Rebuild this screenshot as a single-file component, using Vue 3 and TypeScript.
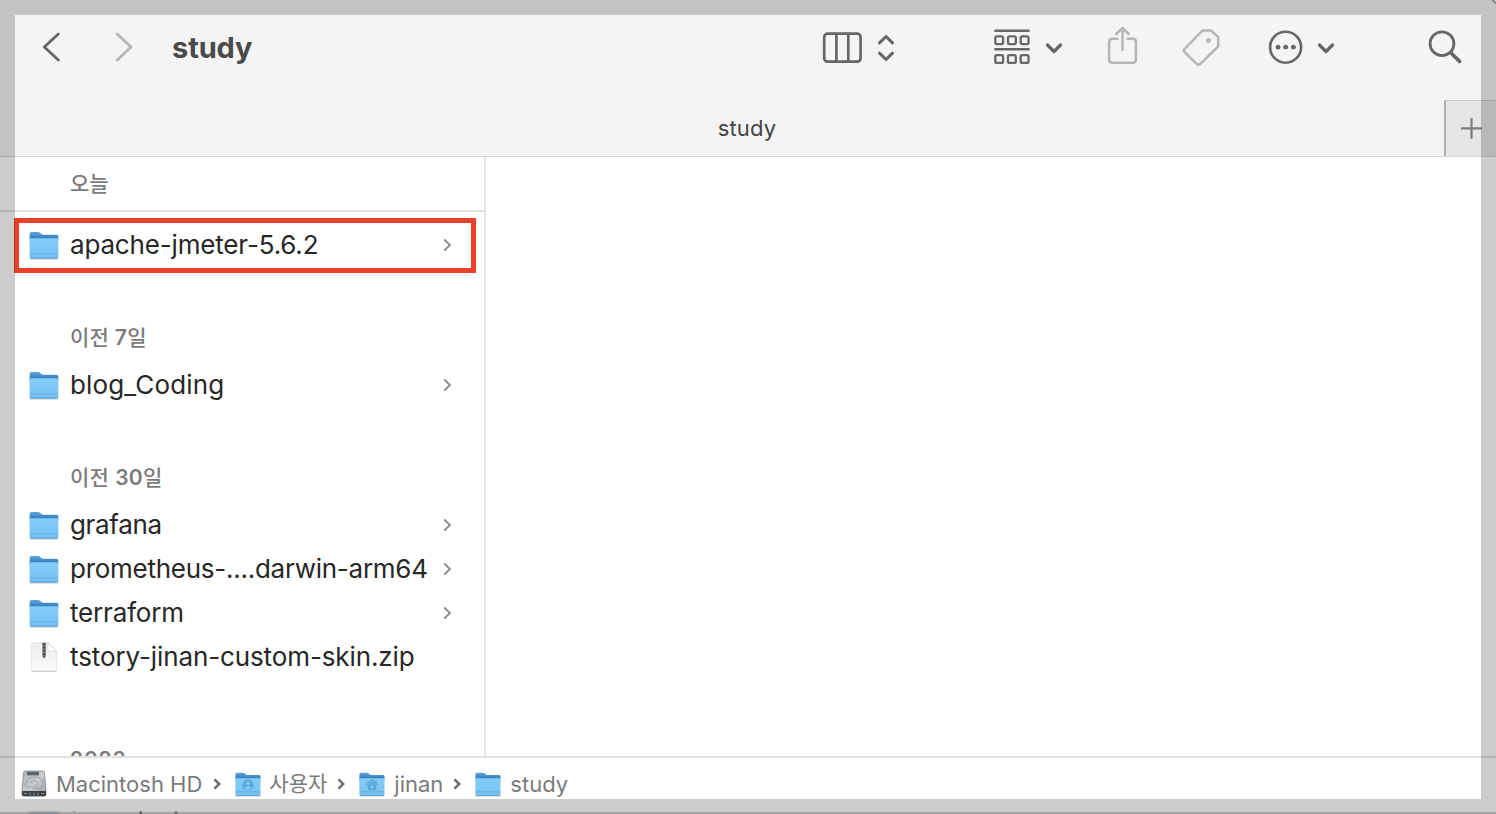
<script setup lang="ts">
interface Entry { name: string; kind: 'folder' | 'zip'; spacing: number; marked?: boolean }
interface Group { title: string; spacing: number; entries: Entry[] }
interface Crumb { label: string; icon: 'disk' | 'users' | 'home' | 'folder'; cls: string }

const groups: Group[] = [
  { title: '오늘', spacing: 0, entries: [{ name: 'apache-jmeter-5.6.2', kind: 'folder', spacing: -0.17, marked: true }] },
  { title: '이전 7일', spacing: 0.2, entries: [{ name: 'blog_Coding', kind: 'folder', spacing: 0.14 }] },
  {
    title: '이전 30일',
    spacing: 0.3,
    entries: [
      { name: 'grafana', kind: 'folder', spacing: -0.35 },
      { name: 'prometheus-....darwin-arm64', kind: 'folder', spacing: -0.26 },
      { name: 'terraform', kind: 'folder', spacing: -0.17 },
      { name: 'tstory-jinan-custom-skin.zip', kind: 'zip', spacing: -0.11 },
    ],
  },
  { title: '2023', spacing: 0.8, entries: [] },
]

const crumbs: Crumb[] = [
  { label: 'Macintosh HD', icon: 'disk', cls: 'c-disk' },
  { label: '사용자', icon: 'users', cls: 'c-users' },
  { label: 'jinan', icon: 'home', cls: 'c-home' },
  { label: 'study', icon: 'folder', cls: 'c-study' },
]

const runs = (title: string): string[] => title.split(/(\d+)/).filter(Boolean)
const isNumber = (run: string): boolean => /^\d+$/.test(run)
</script>

<template>
  <div class="window">
    <svg class="defs" width="0" height="0">
      <defs>
        <linearGradient id="gBack" x1="0" y1="0" x2="0" y2="1">
          <stop offset="0" stop-color="#5fa8dc" /><stop offset=".6" stop-color="#3a84c0" />
        </linearGradient>
        <linearGradient id="gFront" x1="0" y1="0" x2="0" y2="1">
          <stop offset="0" stop-color="#84ccf8" /><stop offset="1" stop-color="#76c2f3" />
        </linearGradient>
        <linearGradient id="gPaper" x1="0" y1="0" x2="0" y2="1">
          <stop offset="0" stop-color="#ededed" /><stop offset="1" stop-color="#fafafa" />
        </linearGradient>
        <linearGradient id="gDisk" x1="0" y1="0" x2="1" y2="1">
          <stop offset="0" stop-color="#aeb3b7" /><stop offset=".5" stop-color="#c8ccd0" /><stop offset="1" stop-color="#979ca0" />
        </linearGradient>
        <symbol id="folder" viewBox="0 0 32 32">
          <path d="M1.800 28.500h28.400v1.200q0 1-1.200 1H3q-1.200 0-1.200-1z" fill="#000" opacity=".16" />
          <path d="M1.600 4.900q0-1.900 1.900-1.900h6.600q1.100 0 1.900.7l1.600 1.500q.7.600 1.700.600H28.600q1.700 0 1.700 1.700V12H1.600z" fill="url(#gBack)" />
          <path d="M1.600 10.600q0-1.300 1.300-1.300H29q1.300 0 1.300 1.300V28q0 1.500-1.500 1.500H3.100q-1.500 0-1.500-1.500z" fill="url(#gFront)" />
          <path d="M1.800 25H30.100" stroke="#5faadd" stroke-width=".9" />
          <path d="M2.200 29.100H29.700" stroke="#529bcd" stroke-width=".9" />
        </symbol>
      </defs>
    </svg>

    <header class="toolbar">
      <svg viewBox="0 0 1496 86" fill="none" stroke="#676767" stroke-linecap="round" stroke-linejoin="round" aria-hidden="true">
        <path d="M58.300 34L44.300 47L58.300 60" stroke-width="2.900" />
        <path d="M117.200 34L131 47L117.200 60" stroke="#b6b6b6" stroke-width="2.900" />
        <g stroke-width="2.700">
          <rect x="824.200" y="33.700" width="36.400" height="28" rx="3.500" />
          <path d="M836.400 34v27.500M848.300 34v27.500" />
        </g>
        <path d="M879.500 42.800L886 36.500L892.500 42.800M879.500 53.200L886 59.500L892.500 53.200" stroke-width="3.100" />
        <path d="M995.300 30.700H1028.700M995.300 49.300H1028.700" stroke-width="2.500" />
        <g stroke-width="2.300">
          <rect v-for="x in [995.300, 1008, 1020.700]" :key="x" :x="x" y="36.300" width="7.800" height="7.800" rx="1.500" />
          <rect v-for="x in [995.300, 1008, 1020.700]" :key="x" :x="x" y="55.100" width="7.800" height="7.800" rx="1.500" />
        </g>
        <path d="M1047.500 45L1054 51.500L1060.500 45" stroke-width="3.200" />
        <g stroke="#b6b6b6" stroke-width="2.500">
          <path d="M1117.500 38.700h-5.200q-3.200 0-3.200 3.200V59.500q0 3.200 3.200 3.200h20.400q3.200 0 3.200-3.200V41.900q0-3.200-3.200-3.200h-5.200" />
          <path d="M1122.500 50V28.500M1116.200 34L1122.500 28L1128.700 34" />
          <path d="M1202.500 30.500H1211L1218.200 37V46.500L1200.300 63.800Q1198.400 65.500 1196.600 63.800L1184.500 51.900Q1183.200 50.500 1184.500 49.100Z" />
          <circle cx="1208.400" cy="40.400" r="2.500" fill="#b6b6b6" stroke="none" />
        </g>
        <circle cx="1285.600" cy="47.200" r="15.500" stroke-width="2.600" />
        <g fill="#676767" stroke="none"><circle cx="1278" cy="47.200" r="2.400" /><circle cx="1285.700" cy="47.200" r="2.400" /><circle cx="1293.400" cy="47.200" r="2.400" /></g>
        <path d="M1319.500 45L1326 51.500L1332.500 45" stroke-width="3.200" />
        <circle cx="1442" cy="43.700" r="11.900" stroke-width="2.800" />
        <path d="M1450.800 52.700L1459.600 61.400" stroke-width="3.600" />
        <path d="M1492 -.5L1496.500 4" stroke="#9c9c9c" stroke-width="1.500" />
      </svg>
      <h1 class="title">study</h1>
    </header>

    <nav class="tabs">
      <div class="tab"><span>study</span></div>
      <button class="add" aria-label="+">
        <svg width="50" height="55" viewBox="0 0 50 55"><path d="M15 27.300H36M25.500 17V37.800" stroke="#7c7c7c" stroke-width="2.200" /></svg>
      </button>
    </nav>

    <main class="content">
      <section class="column">
        <div v-for="g in groups" :key="g.title" class="group">
          <h2 :style="{ letterSpacing: g.spacing + 'px' }"><span v-for="(r, i) in runs(g.title)" :key="i" :class="{ num: isNumber(r) }">{{ r }}</span></h2>
          <div v-for="e in g.entries" :key="e.name" class="row" :class="{ marked: e.marked }">
            <svg v-if="e.kind === 'folder'" class="icon" width="32" height="32"><use href="#folder" /></svg>
            <svg v-else class="icon" width="32" height="32" viewBox="0 0 32 32">
              <path d="M3.500 30H28.500V31H3.500z" fill="#ccc" />
              <path d="M3.300 3Q3.300 1.800 4.500 1.800H20.500L28.700 10V28.500q0 1.200-1.200 1.200h-23q-1.200 0-1.200-1.200z" fill="url(#gPaper)" stroke="#dedede" stroke-width=".7" />
              <path d="M20 1.800V8.500q0 2 2 2H28.700z" fill="#fff" stroke="#cfcfcf" stroke-width=".7" />
              <path d="M14.200 1.800h3.800v12.200q0 3-1.900 3t-1.900-3z" fill="#858585" />
              <path d="M16.100 2V16.500" stroke="#444" stroke-width="2" stroke-dasharray="2 1.400" />
            </svg>
            <span class="name" :style="{ letterSpacing: e.spacing + 'px' }">{{ e.name }}</span>
            <svg v-if="e.kind === 'folder'" class="chev" width="8" height="14" viewBox="0 0 8 14"><path d="M1.200 1.500L7 7L1.200 12.500" fill="none" stroke="#8b8b8b" stroke-width="1.800" /></svg>
          </div>
        </div>
      </section>
      <section class="preview"></section>
    </main>

    <footer class="pathbar">
      <div v-for="(c, i) in crumbs" :key="c.label" class="crumb" :class="c.cls">
        <svg v-if="c.icon === 'disk'" width="28" height="28" viewBox="0 0 28 28">
          <path d="M5 1h18q1.200 0 1.400 1.200L26 20.500v4q0 1.700-1.700 1.700H3.700Q2 26.200 2 24.500v-4L3.600 2.200Q3.800 1 5 1z" fill="url(#gDisk)" stroke="#82888c" stroke-width=".8" />
          <path d="M2.100 21H25.900V24.500q0 1.600-1.600 1.600H3.700Q2.100 26.100 2.100 24.500z" fill="#3d4143" />
          <path d="M4 23.500H7M10 22.500v3M14 22.500v3M18 22.500v3M21 23.500h3" stroke="#8d9396" stroke-width="1.100" />
          <rect x="7" y="1.800" width="12" height="3.500" fill="#5e6468" />
          <path d="M5 16Q6 7.500 14 7T23 12.500Q22.500 18.500 17 18.500Q13 19 11 16.500Q8 19 5 16M10.500 13.500q0-3 3.500-3t3.500 3q0 3-3.500 3" fill="none" stroke="#969da2" stroke-width=".8" />
        </svg>
        <svg v-else width="28" height="28" viewBox="0 0 32 32">
          <use href="#folder" />
          <g v-if="c.icon === 'users'">
            <circle cx="16" cy="17.200" r="6.500" fill="#5aa6da" /><circle cx="16" cy="15.200" r="2.200" fill="#80c8f6" />
            <path d="M11.800 20.700q1.600-2.500 4.200-2.500t4.200 2.500q-1.700 2-4.200 2t-4.200-2z" fill="#80c8f6" />
          </g>
          <g v-if="c.icon === 'home'">
            <path d="M9.200 17.200L16 11L22.800 17.200M20.500 12V15.500" fill="none" stroke="#5aa6da" stroke-width="1.400" />
            <path d="M11.200 17.100L16 12.900L20.800 17.100V23H11.200z" fill="#5aa6da" />
            <circle cx="16" cy="19.300" r="1.900" fill="#80c8f6" />
          </g>
        </svg>
        <span>{{ c.label }}</span>
        <svg v-if="i < 3" class="sep" width="8" height="12" viewBox="0 0 8 12"><path d="M1.500 1.300L6.200 6L1.500 10.700" fill="none" stroke="#6e6e6e" stroke-width="2.600" /></svg>
      </div>
    </footer>
    <div class="under"><i></i><span>iac_study</span></div>
    <div class="frame"></div>
  </div>
</template>

<style>
html, body { margin: 0; overflow: hidden; background: #fff; }
</style>
<style scoped>
* { box-sizing: border-box; }
.window { position: relative; width: 1496px; height: 814px; display: flex; flex-direction: column; overflow: hidden; background: #fff; color: #272727; font-family: Inter, "Noto Sans CJK KR", sans-serif; }
.defs { position: absolute; }
.toolbar { height: 100px; flex: none; background: #f4f4f4; display: grid; }
.toolbar > * { grid-area: 1 / 1; }
.toolbar svg { width: 1496px; height: 86px; }
.title { margin: 28px 0 0 172px; font-size: 29px; line-height: 40px; height: 40px; font-weight: 700; letter-spacing: -.1px; color: #4a4a4a; }
.tabs { height: 57px; flex: none; display: flex; background: #f4f4f4; border-bottom: 1px solid #d5d5d5; }
.tab { flex: 1; padding-left: 50px; text-align: center; font-size: 22px; line-height: 56px; letter-spacing: .1px; color: #444; }
.add { width: 52px; padding: 0; border: 0; border-left: 2px solid #b0b0b0; border-top: 1px solid #c9c9c9; background: #e6e6e6; display: block; }
.add svg { display: block; }
.content { height: 599px; flex: none; display: flex; overflow: hidden; }
.column { width: 486px; border-right: 2px solid #e4e4e4; flex: none; }
.preview { flex: 1; }
.group { padding-bottom: 46px; }
.group h2 { margin: 0; height: 50px; padding-left: 70px; font-size: 21px; line-height: 50px; font-weight: 500; color: #7c7c7c; white-space: pre; }
.num { font-weight: 600; }
.group:first-child h2 { height: 55px; line-height: 54px; border-bottom: 2px solid #e0e0e0; margin-bottom: 6px; }
.group:first-child .row { margin-bottom: -6px; }
.group:last-child { padding-top: 10px; }
.row { display: flex; align-items: center; height: 44px; padding-left: 28px; position: relative; }
.row.marked { height: 55px; margin-left: 14px; width: 462px; padding: 0 0 1px 9px; border: 5px solid #e8422a; }
.icon { flex: none; margin-right: 10px; }
.name { font-size: 26px; line-height: 44px; white-space: nowrap; }
.chev { position: absolute; left: 443px; }
.marked .chev { left: 424px; }
.pathbar { height: 58px; flex: none; border-top: 2px solid #e0e0e0; display: flex; align-items: center; padding: 0 0 4px 20px; background: #fff; font-size: 22px; color: #7b7b7b; }
.crumb { display: flex; align-items: center; white-space: nowrap; line-height: 30px; }
.crumb > span { margin: 0 9px 0 8px; }
.crumb.c-disk > span { margin-right: 11px; }
.crumb.c-users > span { font-size: 21px; line-height: 28px; margin: 0 10px 0 7px; }
.crumb.c-home > span { margin-right: 10px; }
.sep { margin-right: 13px; }
.under { position: absolute; left: 29px; top: 811px; height: 3px; width: 200px; overflow: hidden; }
.under i { position: absolute; left: 0; top: 0; width: 30px; height: 3px; background: #dbe7ef; }
.under span { position: absolute; left: 42px; top: -4px; font-size: 26px; line-height: 26px; letter-spacing: 1px; color: #a0a0a0; filter: blur(.6px); }
.frame { position: absolute; inset: 0; border: 15px solid rgba(0, 0, 0, .2); pointer-events: none; }
.frame::after { content: ""; position: absolute; left: -15px; right: -15px; bottom: -15px; height: 2px; background: rgba(0, 0, 0, .2); }
</style>
